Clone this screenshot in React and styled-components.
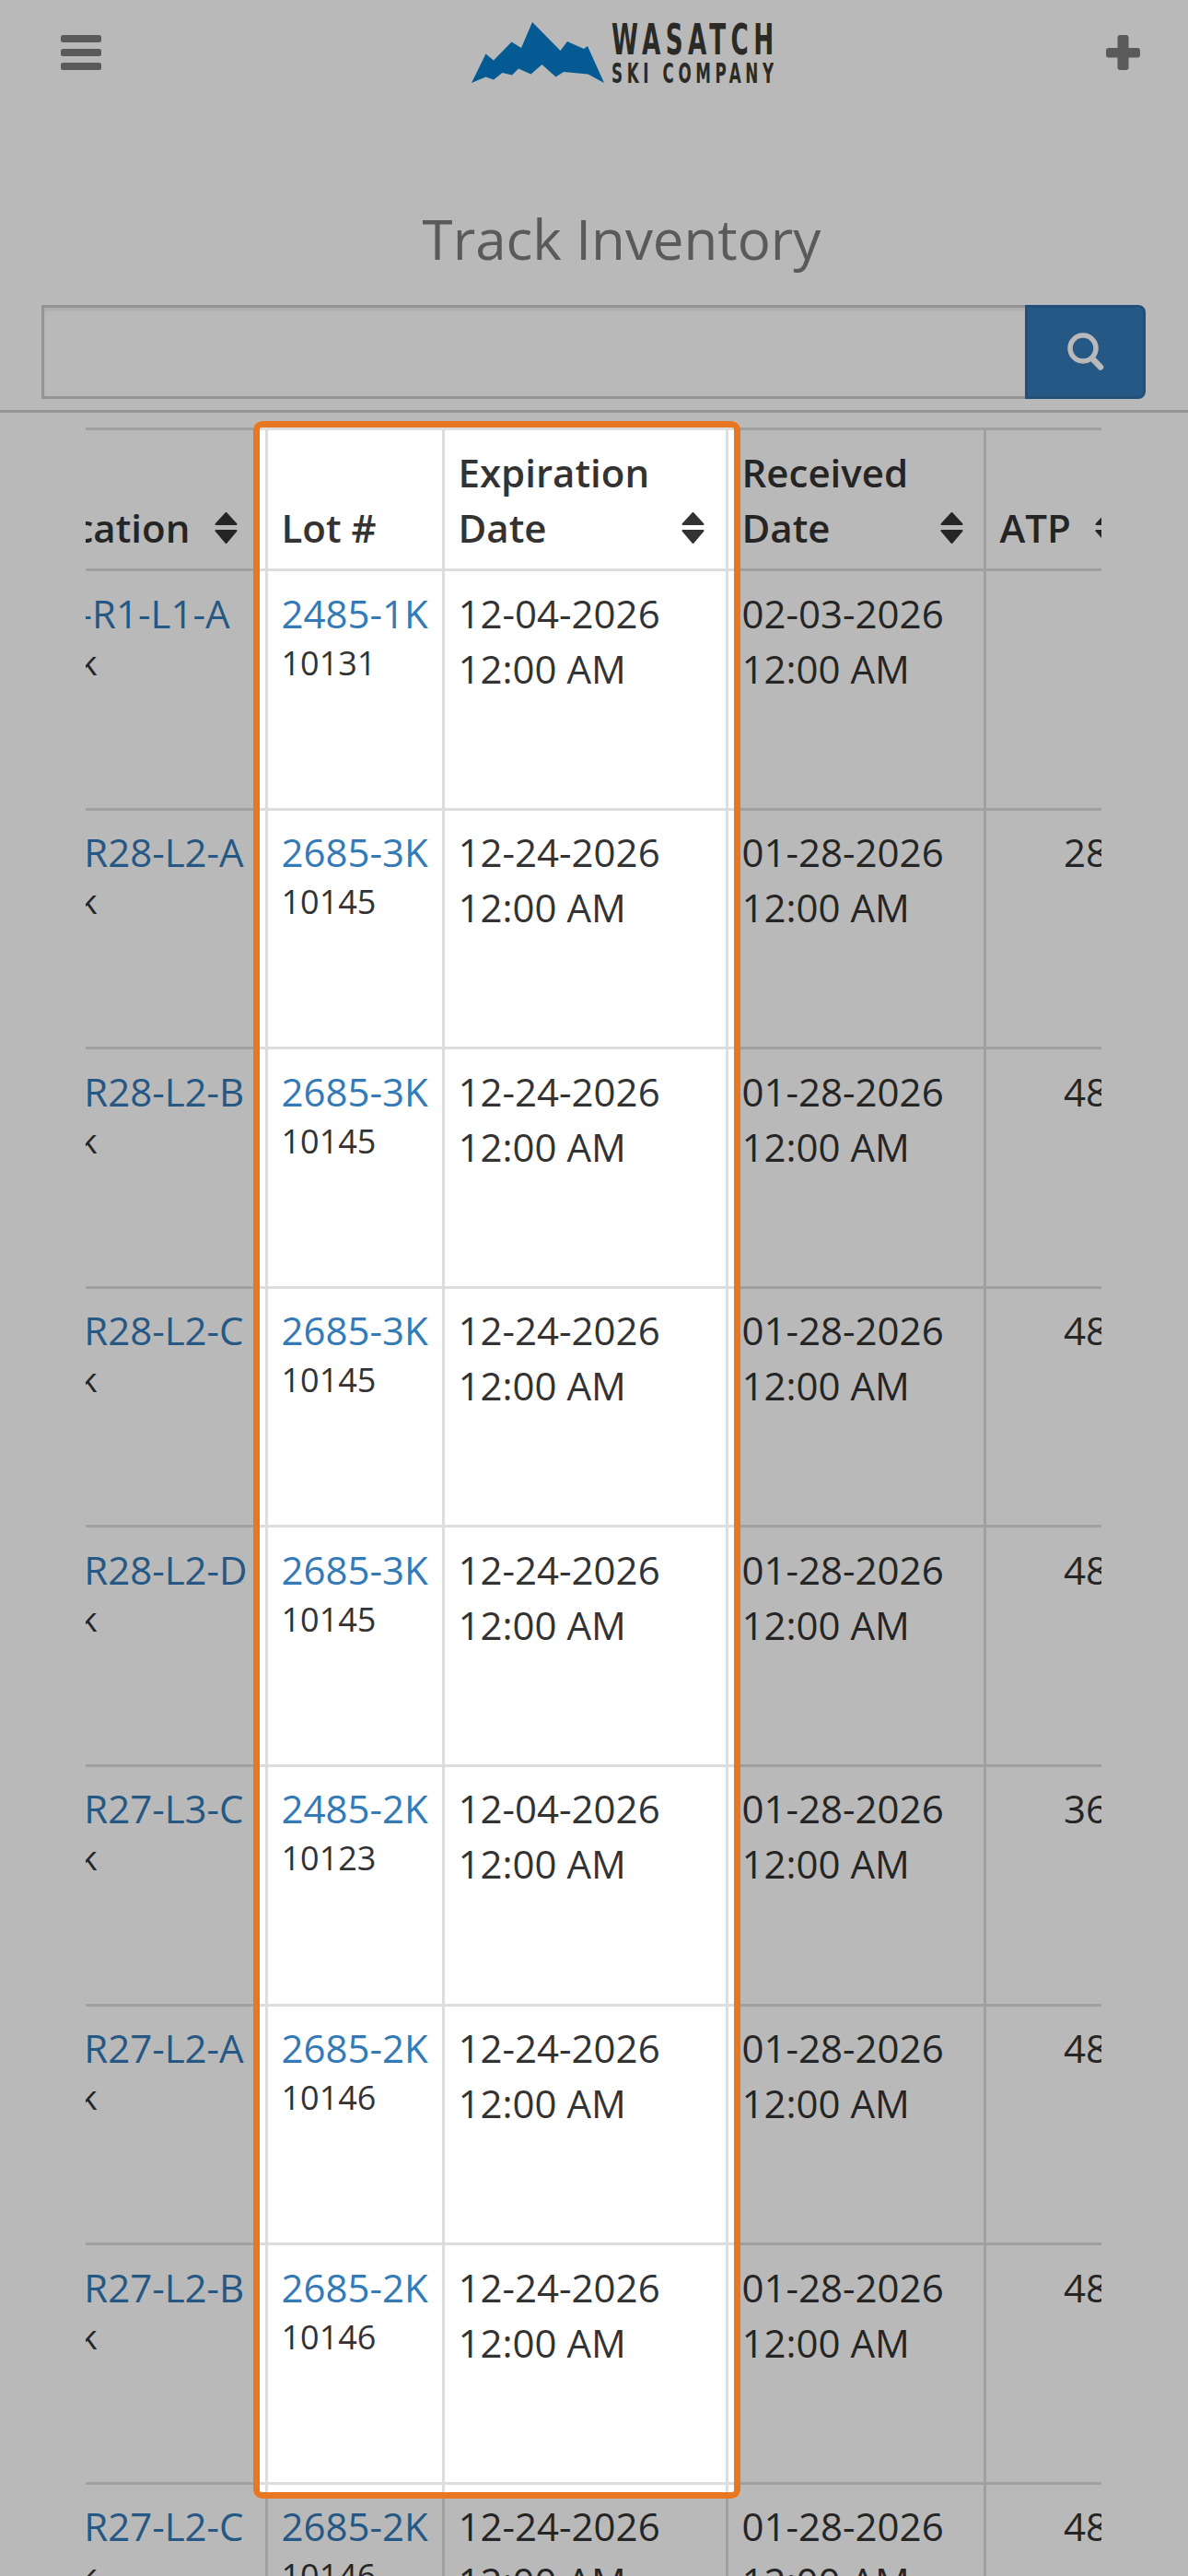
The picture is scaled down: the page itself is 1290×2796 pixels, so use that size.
import React, { useLayoutEffect, useRef } from "react";
import styled, { createGlobalStyle } from "styled-components";

const GlobalStyle = createGlobalStyle`
  html, body {
    margin: 0;
    height: 100%;
    overflow: hidden;
    background: #fff;
    font-family: "Open Sans", "Liberation Sans", sans-serif;
    color: #333;
  }
  * { box-sizing: border-box; }
`;

const Page = styled.div`
  position: relative;
  width: 1290px;
  height: 2796px;
  overflow: hidden;
  background: #fff;
`;

const Header = styled.header`
  display: flex;
  align-items: center;
  justify-content: space-between;
  padding: 24px 52px 0 66px;
`;

const IconButton = styled.button`
  display: flex;
  padding: 0;
  border: none;
  background: none;
  color: #7c7c7c;
`;

const Logo = styled.svg`
  display: block;
  width: 328px;
  height: 66px;
  margin-left: 40px;
`;

const LogoText = styled.text`
  font-family: "Liberation Sans Narrow", "DejaVu Sans Condensed", sans-serif;
  font-weight: 700;
  fill: #3a3a36;
`;

const Title = styled.h1`
  margin: 136px 0 39px;
  padding-left: 60px;
  text-align: center;
  font-size: 60px;
  line-height: 66px;
  font-weight: 400;
  color: #7c7c7c;
`;

const SearchBar = styled.form`
  display: flex;
  height: 102px;
  margin: 0 46px 0 45px;
`;

const SearchInput = styled.input`
  flex: 1;
  min-width: 0;
  border: 3px solid #ccc;
  border-right: none;
  background: #fff;
  box-shadow: inset 0 3px 3px rgba(0, 0, 0, 0.075);
`;

const SearchButton = styled.button`
  display: flex;
  align-items: center;
  justify-content: center;
  width: 131px;
  padding: 0;
  border: 3px solid #2e6da4;
  border-radius: 0 8px 8px 0;
  background: #337ab7;
`;

const Divider = styled.hr`
  height: 3px;
  margin: 12px 0 16px;
  border: none;
  background: #ccc;
`;

const TableScroll = styled.div`
  width: 1103px;
  margin-left: 93px;
  overflow-x: auto;
  scrollbar-width: none;
`;

const Table = styled.table`
  width: 1400px;
  table-layout: fixed;
  border-collapse: separate;
  border-spacing: 0;
`;

const HeadCell = styled.th`
  height: 156px;
  padding: 15px 15px 14px 14.5px;
  border-top: 3px solid #ddd;
  border-right: 3px solid #ddd;
  border-bottom: 3px solid #ddd;
  vertical-align: bottom;
  text-align: left;
  font-size: 42px;
  line-height: 60px;
  font-weight: 600;
  color: #333;

  &:first-child {
    padding-left: 15px;
  }
`;

const HeadInner = styled.div`
  display: flex;
  align-items: flex-end;
  justify-content: space-between;
  margin-right: ${(p) => p.$inset}px;
`;

const SortIcon = styled.svg`
  flex: none;
  width: 25px;
  height: 34px;
  margin-bottom: 13px;
`;

const Cell = styled.td`
  height: 259.6px;
  padding: 15.5px 15px 15.5px 14.5px;
  border-right: 3px solid #ddd;
  border-bottom: 3px solid #ddd;
  vertical-align: top;
  white-space: nowrap;
  text-align: ${(p) => (p.$right ? "right" : "left")};
  font-size: 42px;
  line-height: 60px;

  &:first-child {
    padding-left: 15px;
  }
`;

const LotLink = styled.a`
  display: block;
  color: #337ab7;
  text-decoration: none;
`;

const SubText = styled.div`
  font-size: 36px;
  line-height: 47px;
  color: #333;
`;

const Spotlight = styled.div`
  position: absolute;
  left: 275px;
  top: 457px;
  width: 529px;
  height: 2255px;
  border: 7px solid #e87722;
  border-radius: 9px;
  box-shadow: 0 0 0 3000px rgba(0, 0, 0, 0.275);
  pointer-events: none;
`;

const rows = [
  { loc: "D1-R1-L1-A", lot: "2485-1K", num: "10131", exp: "12-04-2026", rec: "02-03-2026", atp: "" },
  { loc: "F1-R28-L2-A", lot: "2685-3K", num: "10145", exp: "12-24-2026", rec: "01-28-2026", atp: "288" },
  { loc: "F1-R28-L2-B", lot: "2685-3K", num: "10145", exp: "12-24-2026", rec: "01-28-2026", atp: "480" },
  { loc: "F1-R28-L2-C", lot: "2685-3K", num: "10145", exp: "12-24-2026", rec: "01-28-2026", atp: "480" },
  { loc: "F1-R28-L2-D", lot: "2685-3K", num: "10145", exp: "12-24-2026", rec: "01-28-2026", atp: "480" },
  { loc: "F1-R27-L3-C", lot: "2485-2K", num: "10123", exp: "12-04-2026", rec: "01-28-2026", atp: "360" },
  { loc: "F1-R27-L2-A", lot: "2685-2K", num: "10146", exp: "12-24-2026", rec: "01-28-2026", atp: "480" },
  { loc: "F1-R27-L2-B", lot: "2685-2K", num: "10146", exp: "12-24-2026", rec: "01-28-2026", atp: "480" },
  { loc: "F1-R27-L2-C", lot: "2685-2K", num: "10146", exp: "12-24-2026", rec: "01-28-2026", atp: "480" },
];

const Sort = () => (
  <SortIcon viewBox="0 0 25 34">
    <path
      d="M12.5 1 L23.5 13 H1.5 Z M1.5 20 H23.5 L12.5 33 Z"
      fill="#333"
      stroke="#333"
      strokeWidth="2"
      strokeLinejoin="round"
    />
  </SortIcon>
);

export default function App() {
  const scrollRef = useRef(null);

  // the table sits scrolled sideways in the screenshot
  useLayoutEffect(() => {
    scrollRef.current.scrollLeft = 76;
  }, []);

  return (
    <Page>
      <GlobalStyle />
      <Header>
        <IconButton aria-label="Menu">
          <svg width="44" height="38" viewBox="0 0 44 38" fill="currentColor">
            <rect y="0" width="44" height="8" rx="2.5" />
            <rect y="15" width="44" height="8" rx="2.5" />
            <rect y="30" width="44" height="8" rx="2.5" />
          </svg>
        </IconButton>
        <Logo viewBox="0 0 328 66">
          <path
            fill="#067ccb"
            d="M0 66 L15.5 34.5 L24 41.5 L43.5 21.5 L54 28 L66 0 L96.5 31 L104 21 L122 29 L126 26 L144 66 L126.5 56.5 L100 54 L91.5 59.5 L76.5 46 L64.5 56.5 L51 50.5 L44 57.5 L33.5 55 L24 62.5 L15.5 59.5 Z"
          />
          <LogoText
            transform="translate(152 35) scale(0.62 1)"
            fontSize="47"
            textLength="284"
            lengthAdjust="spacing"
          >
            WASATCH
          </LogoText>
          <LogoText
            transform="translate(152 66) scale(0.62 1)"
            fontSize="30"
            textLength="284"
            lengthAdjust="spacing"
          >
            SKI COMPANY
          </LogoText>
        </Logo>
        <IconButton aria-label="Add">
          <svg width="37" height="38" viewBox="0 0 37 38" fill="currentColor">
            <rect x="12.5" y="0" width="12" height="38" rx="3" />
            <rect x="0" y="14" width="37" height="10.5" rx="3" />
          </svg>
        </IconButton>
      </Header>

      <Title>Track Inventory</Title>

      <SearchBar>
        <SearchInput type="text" />
        <SearchButton type="button" aria-label="Search">
          <svg width="40" height="42" viewBox="0 0 40 42" fill="none" stroke="#fff">
            <circle cx="17" cy="17" r="14" strokeWidth="5.5" />
            <path d="M27 28 L36 37.5" strokeWidth="6.5" strokeLinecap="round" />
          </svg>
        </SearchButton>
      </SearchBar>

      <Divider />

      <TableScroll ref={scrollRef}>
        <Table>
          <colgroup>
            <col style={{ width: 274 }} />
            <col style={{ width: 192 }} />
            <col style={{ width: 308 }} />
            <col style={{ width: 280 }} />
            <col style={{ width: 174 }} />
            <col />
          </colgroup>
          <thead>
            <tr>
              <HeadCell>
                <HeadInner $inset={15}>
                  Location
                  <Sort />
                </HeadInner>
              </HeadCell>
              <HeadCell>Lot #</HeadCell>
              <HeadCell>
                <HeadInner $inset={8}>
                  <span>
                    Expiration
                    <br />
                    Date
                  </span>
                  <Sort />
                </HeadInner>
              </HeadCell>
              <HeadCell>
                <HeadInner $inset={7}>
                  <span>
                    Received
                    <br />
                    Date
                  </span>
                  <Sort />
                </HeadInner>
              </HeadCell>
              <HeadCell>
                <HeadInner $inset={13}>
                  ATP
                  <Sort />
                </HeadInner>
              </HeadCell>
              <HeadCell />
            </tr>
          </thead>
          <tbody>
            {rows.map((row, i) => (
              <tr key={i}>
                <Cell>
                  <LotLink href="#">{row.loc}</LotLink>
                  <SubText>Bulk</SubText>
                </Cell>
                <Cell>
                  <LotLink href="#">{row.lot}</LotLink>
                  <SubText>{row.num}</SubText>
                </Cell>
                <Cell>
                  {row.exp}
                  <br />
                  12:00 AM
                </Cell>
                <Cell>
                  {row.rec}
                  <br />
                  12:00 AM
                </Cell>
                <Cell $right>{row.atp}</Cell>
                <Cell />
              </tr>
            ))}
          </tbody>
        </Table>
      </TableScroll>

      <Spotlight />
    </Page>
  );
}
